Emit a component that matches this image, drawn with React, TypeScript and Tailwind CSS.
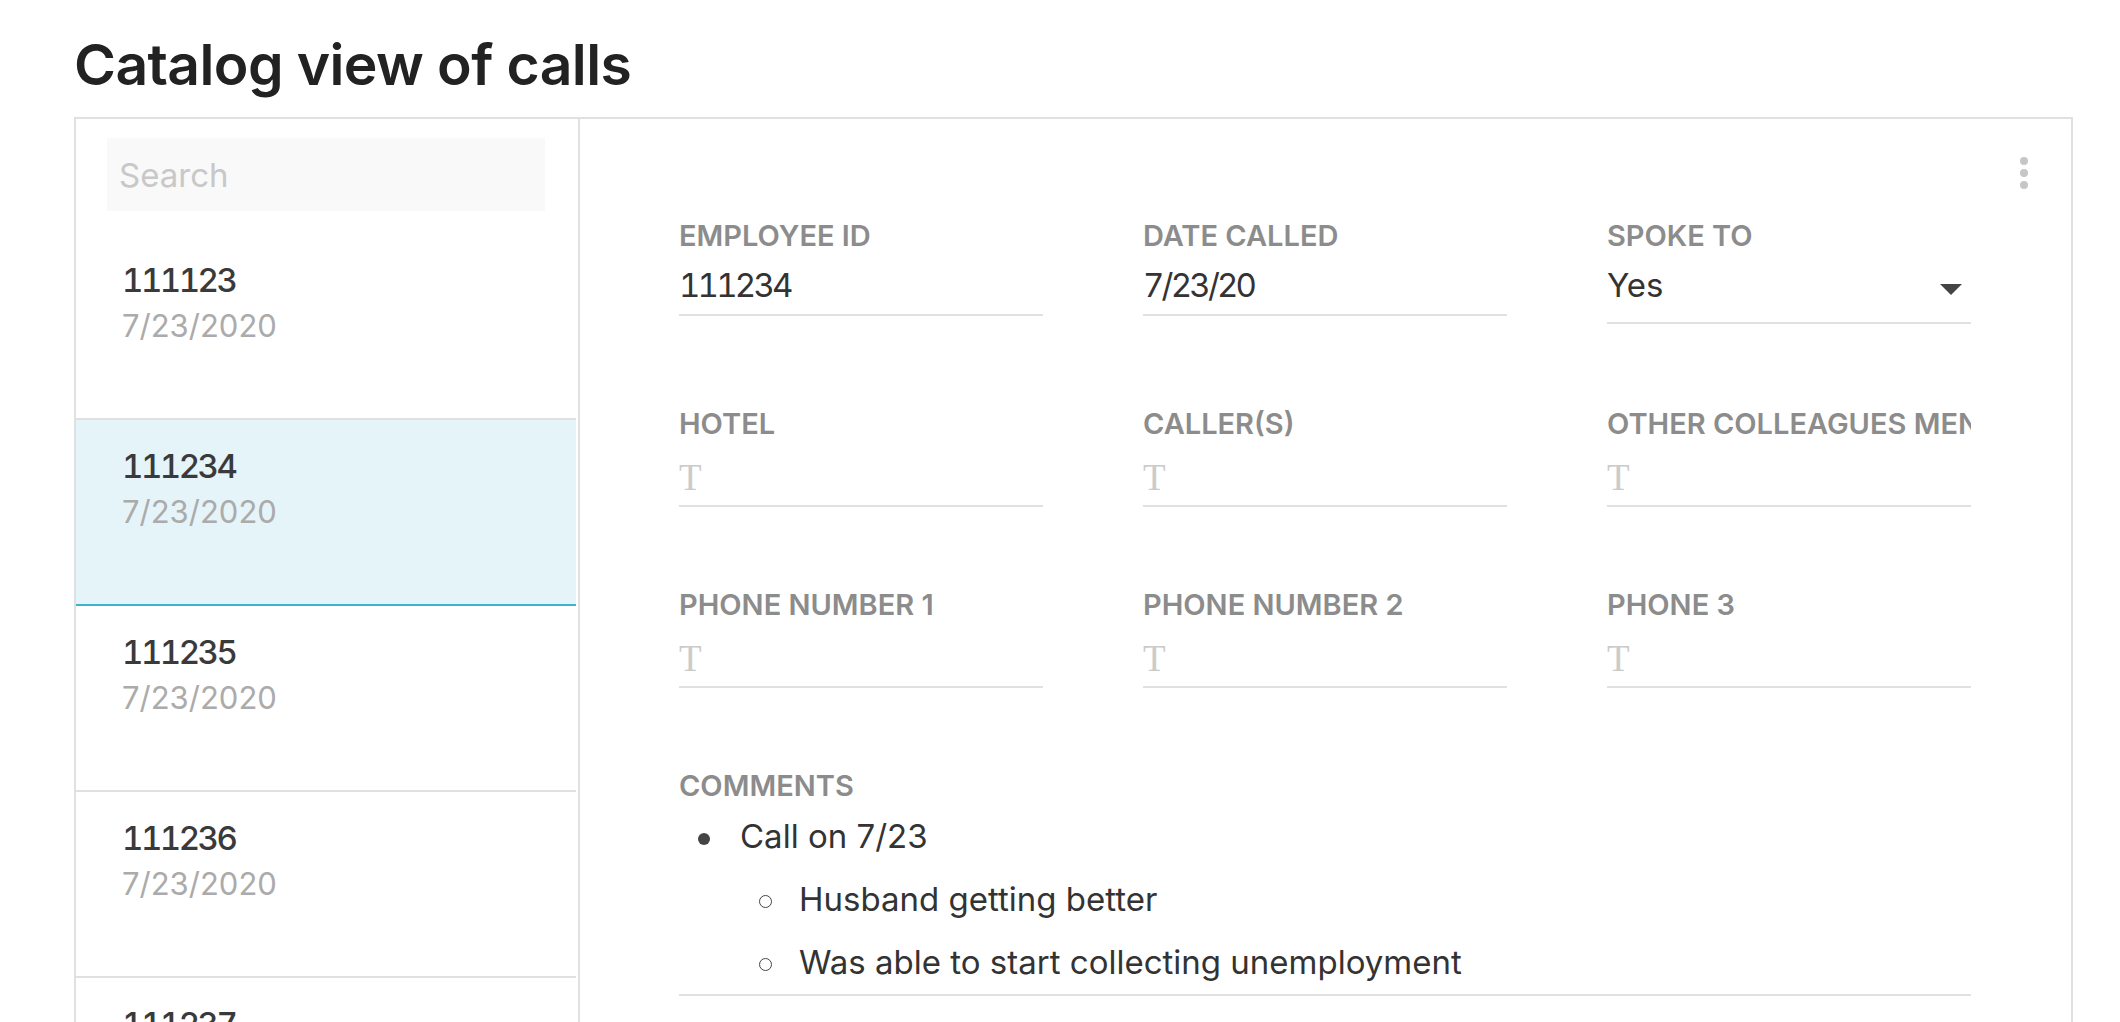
const calls = [
  { id: "111123", date: "7/23/2020" },
  { id: "111234", date: "7/23/2020" },
  { id: "111235", date: "7/23/2020" },
  { id: "111236", date: "7/23/2020" },
  { id: "111237", date: "7/23/2020" },
  { id: "111238", date: "7/23/2020" },
];

const selectedId = "111234";

function Label({ children }: { children: React.ReactNode }) {
  return (
    <div className="h-[36px] overflow-hidden whitespace-nowrap text-[29px] leading-[36px] font-semibold uppercase text-[#8c8c8c]">
      {children}
    </div>
  );
}

function TextField({ label, value }: { label: string; value?: string }) {
  if (value) {
    return (
      <div>
        <Label>{label}</Label>
        <div className="mt-[9px] box-content h-[44px] border-b-2 border-[#e0e0e0] pb-[7px] text-[33px] leading-[44px] tabular-nums tracking-[-2.8px] text-[#333]">
          {value}
        </div>
      </div>
    );
  }
  return (
    <div>
      <Label>{label}</Label>
      <div className="mt-[5px] box-content h-[44px] border-b-2 border-[#e0e0e0] pb-[14px]">
        <span className="block pt-[13px] font-['Liberation_Serif',serif] text-[37px] leading-[35px] text-[#cbcbcb]">
          T
        </span>
      </div>
    </div>
  );
}

function SelectField({ label, value }: { label: string; value: string }) {
  return (
    <div>
      <Label>{label}</Label>
      <div className="mt-[9px] box-content flex h-[44px] items-start justify-between border-b-2 border-[#e0e0e0] pb-[15px] text-[33px] leading-[44px] text-[#333]">
        <span>{value}</span>
        <svg width="22" height="12" viewBox="0 0 22 12" className="mr-[9px] mt-[21px]">
          <path d="M0 0 H22 L11 11 Z" fill="#444" />
        </svg>
      </div>
    </div>
  );
}

export default function App() {
  return (
    <div className="h-screen overflow-hidden bg-white pl-[74px] pr-[47px] font-['Inter',sans-serif] text-[#333]">
      <h1 className="pt-[31px] text-[57px] leading-[68px] font-semibold tracking-[-0.6px] text-[#222]">
        Catalog view of calls
      </h1>
      <div className="mt-[18px] flex h-[1400px] border-2 border-b-0 border-[#e0e0e0]">
        <aside className="mr-[2px] w-[500px] shrink-0">
          <div className="px-[31px] pt-[19px] pb-[23px]">
            <input
              placeholder="Search"
              className="h-[73px] w-full bg-[#f9f9f9] px-[12px] text-[33px] text-[#333] outline-none placeholder:text-[#c8c8c8]"
            />
          </div>
          {calls.map((c) => (
            <div
              key={c.id}
              className={
                c.id === selectedId
                  ? "h-[186px] border-b-2 border-[#3db3d1] bg-[#e5f4f9] pl-[46px] pt-[23px]"
                  : "h-[186px] border-b-2 border-[#e0e0e0] pl-[46px] pt-[23px]"
              }
            >
              <div className="text-[33px] leading-[46px] font-medium tabular-nums tracking-[-2.5px] text-[#3a3a3a]">
                {c.id}
              </div>
              <div className="text-[31px] leading-[45px] text-[#ababab]">{c.date}</div>
            </div>
          ))}
        </aside>

        <section className="relative flex-1 border-l-2 border-[#e0e0e0] pl-[99px] pr-[100px] pt-[99px]">
          <div className="absolute right-[43px] top-[38px] flex flex-col gap-[4px]">
            <span className="h-[8px] w-[8px] rounded-full bg-[#c6c6c6]" />
            <span className="h-[8px] w-[8px] rounded-full bg-[#c6c6c6]" />
            <span className="h-[8px] w-[8px] rounded-full bg-[#c6c6c6]" />
          </div>

          <div className="grid grid-cols-3 gap-x-[100px] gap-y-[80px]">
            <div className="col-span-3 grid grid-cols-3 gap-x-[100px] pb-[2px]">
              <TextField label="Employee ID" value="111234" />
              <TextField label="Date called" value="7/23/20" />
              <SelectField label="Spoke to" value="Yes" />
            </div>
            <TextField label="Hotel" />
            <TextField label="Caller(s)" />
            <TextField label="Other colleagues mentioned" />
            <TextField label="Phone number 1" />
            <TextField label="Phone number 2" />
            <TextField label="Phone 3" />

            <div className="col-span-3">
              <Label>Comments</Label>
              <div className="mt-[10px] flex flex-col gap-[19px] border-b-2 border-[#e0e0e0] pb-[10px] text-[33px] leading-[44px] text-[#333]">
                <div className="flex items-start pl-[19px]">
                  <span className="mt-[19px] h-[12px] w-[12px] shrink-0 rounded-full bg-[#444]" />
                  <span className="ml-[30px]">Call on 7/23</span>
                </div>
                <div className="flex items-start pl-[80px]">
                  <span className="mt-[18px] h-[13px] w-[13px] shrink-0 rounded-full border-[1.5px] border-[#444]" />
                  <span className="ml-[27px]">Husband getting better</span>
                </div>
                <div className="flex items-start pl-[80px]">
                  <span className="mt-[18px] h-[13px] w-[13px] shrink-0 rounded-full border-[1.5px] border-[#444]" />
                  <span className="ml-[27px]">Was able to start collecting unemployment</span>
                </div>
              </div>
            </div>
          </div>
        </section>
      </div>
    </div>
  );
}
